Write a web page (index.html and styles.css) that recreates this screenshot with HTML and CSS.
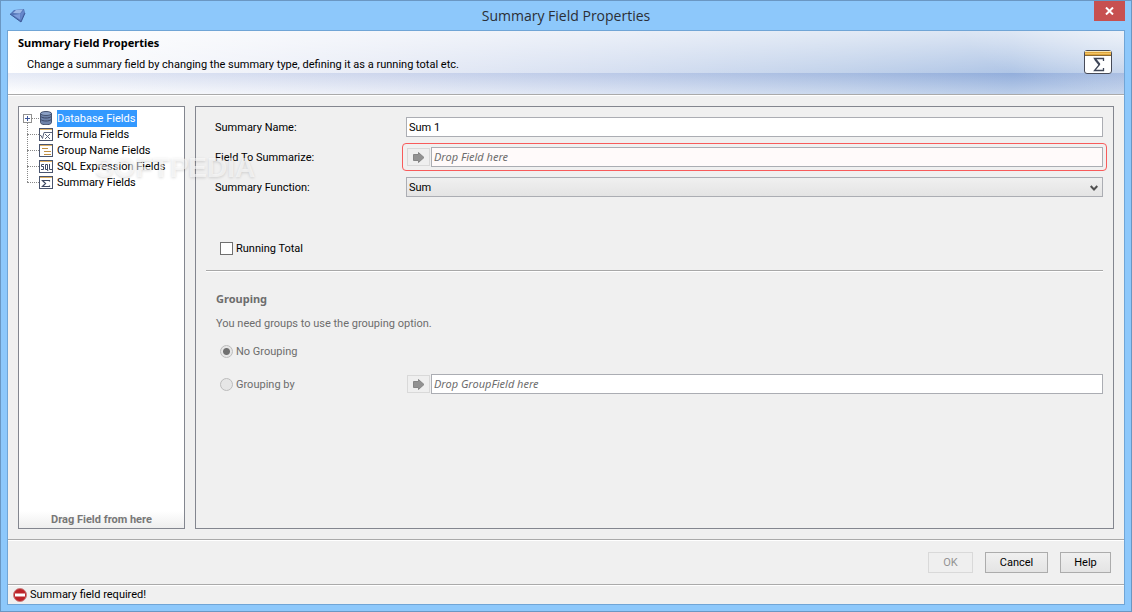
FILE: index.html
```html
<!DOCTYPE html>
<html lang="en">
<head>
<meta charset="utf-8">
<title>Summary Field Properties</title>
<link rel="stylesheet" href="styles.css">
</head>
<body>
<div class="window">
  <header class="titlebar">
    <svg class="gem" width="16" height="14" viewBox="0 0 16 14"><path d="M0 5 4 1l10-1 1 4-4 9z" fill="#5375b8"/><path d="M3 4l3-3 7-.5-3 4z" fill="#9db8e8"/><path d="M3 6l7-1 .5 6z" fill="#7d9cdb"/><path d="M10 5l4-4v3l-3 7z" fill="#6687cb"/><path d="M0 5l11 8 4-9" fill="none" stroke="#3d5898"/></svg>
    <h1 class="caption">Summary Field Properties</h1>
    <button class="close" aria-label="Close"><svg width="9" height="8" viewBox="0 0 9 8"><path d="M1 .5l7 7M8 .5l-7 7" stroke="#fff" stroke-width="2"/></svg></button>
  </header>
  <main class="client">
    <section class="banner">
      <div>
        <h2 class="banner-title">Summary Field Properties</h2>
        <p class="banner-text">Change a summary field by changing the summary type, defining it as a running total etc.</p>
      </div>
      <svg class="banner-icon" width="28" height="24" viewBox="0 0 28 24"><rect x=".5" y=".5" width="27" height="23" rx="2.5" fill="#fff" stroke="#474b58"/><path d="M1 2h26v4H1z" fill="#dfa53b"/><path d="M1 1.500h26" stroke="#fae6b2"/><path d="M1 3.500h26" stroke="#f0c468"/><path d="M1 5.500h26" stroke="#8d6a33"/><path d="M19.500 11V8.500h-9l5 6-5 6h9V18" fill="none" stroke="#3f4658" stroke-width="1.300"/><path d="M11 9l4.500 5.500" stroke="#3f4658" stroke-width="2"/></svg>
    </section>
    <div class="content">
      <nav class="tree-panel" aria-label="Fields">
        <ul class="tree">
          <li class="node root"><button class="expand" aria-label="Expand"></button><svg class="node-icon" width="14" height="14" viewBox="0 0 14 14"><path d="M1.500 2.500v9c0 3 11 3 11 0v-9z" fill="#6e83aa" stroke="#44526f"/><ellipse cx="7" cy="2.500" rx="5.500" ry="2" fill="#8ca1c6" stroke="#44526f"/><path d="M2 5.500c1 2 9 2 10 0M2 8.500c1 2 9 2 10 0" fill="none" stroke="#3b4868"/></svg><span class="node-label selected">Database Fields</span></li>
          <li class="node"><svg class="node-icon" width="14" height="13" viewBox="0 0 14 13"><rect x=".5" y=".5" width="13" height="12" fill="#fff" stroke="#4a556f"/><path d="M1 1.500h12" stroke="#dfb266"/><path d="M0 7.500h2l1.500 3 1.500-6h8M6 6l5 5M11 6l-5 5" fill="none" stroke="#59637b"/></svg><span class="node-label">Formula Fields</span></li>
          <li class="node"><svg class="node-icon" width="14" height="13" viewBox="0 0 14 13"><rect x=".5" y=".5" width="13" height="12" fill="#fff" stroke="#4a556f"/><path d="M1 1.500h12" stroke="#dfb266"/><path d="M3 4.500h6M5 7.500h7M5 10.500h7" stroke="#c08f42"/></svg><span class="node-label">Group Name Fields</span></li>
          <li class="node"><svg class="node-icon" width="14" height="13" viewBox="0 0 14 13"><rect x=".5" y=".5" width="13" height="12" fill="#fff" stroke="#4a556f"/><path d="M1 1.500h12" stroke="#dfb266"/><path d="M5 4.500H2.500v2h2v3H2M6.500 4.500h2v5h-2zM8 9l1 2M10.500 4v5.500H13" fill="none" stroke="#3f4a63"/></svg><span class="node-label">SQL Expression Fields</span></li>
          <li class="node"><svg class="node-icon" width="14" height="13" viewBox="0 0 14 13"><rect x=".5" y=".5" width="13" height="12" fill="#fff" stroke="#4a556f"/><path d="M1 1.500h12" stroke="#dfb266"/><path d="M10.500 5.500v-1h-7l3 3-3 3h7v-1" fill="none" stroke="#3f4a63" stroke-width="1.200"/></svg><span class="node-label">Summary Fields</span></li>
        </ul>
        <p class="drag-hint">Drag Field from here</p>
      </nav>
      <form class="form-panel">
        <div class="row">
          <label for="name">Summary Name:</label>
          <input class="text" id="name" type="text" value="Sum 1">
        </div>
        <div class="row">
          <label for="field">Field To Summarize:</label>
          <div class="drop invalid">
            <button class="arrow" type="button" aria-label="Add field"><svg width="12" height="11" viewBox="0 0 12 11"><path d="M.5 2.500h5v-2L11 5.500l-5.500 5v-2h-5z" fill="#929292" stroke="#858585"/></svg></button>
            <input class="text" id="field" type="text" placeholder="Drop Field here">
          </div>
        </div>
        <div class="row">
          <label for="function">Summary Function:</label>
          <div class="combo"><select class="select" id="function"><option>Sum</option></select><svg class="chevron" width="8" height="7" viewBox="0 0 8 7"><path d="M.7 1 4 4.500 7.300 1" fill="none" stroke="#505050" stroke-width="2"/></svg></div>
        </div>
        <label class="choice running"><input class="check" type="checkbox">Running Total</label>
        <hr class="rule">
        <fieldset class="grouping">
          <legend class="legend">Grouping</legend>
          <p class="note">You need groups to use the grouping option.</p>
          <label class="choice no-group"><input class="radio" type="radio" name="grouping" checked disabled>No Grouping</label>
          <div class="row group-by">
            <label class="choice"><input class="radio" type="radio" name="grouping" disabled>Grouping by</label>
            <div class="drop">
              <button class="arrow" type="button" aria-label="Add group field"><svg width="12" height="11" viewBox="0 0 12 11"><path d="M.5 2.500h5v-2L11 5.500l-5.500 5v-2h-5z" fill="#929292" stroke="#858585"/></svg></button>
              <input class="text" type="text" placeholder="Drop GroupField here" aria-label="Group field">
            </div>
          </div>
        </fieldset>
      </form>
    </div>
    <div class="actions">
      <button class="btn ok" disabled>OK</button>
      <button class="btn cancel">Cancel</button>
      <button class="btn help">Help</button>
    </div>
    <footer class="status">
      <svg width="14" height="14" viewBox="0 0 14 14"><circle cx="7" cy="7" r="6.500" fill="#bd2328" stroke="#c98080"/><path d="M2 5.500h10v3H2z" fill="#fff"/></svg>
      <span>Summary field required!</span>
    </footer>
  </main>
  <div class="watermark" aria-hidden="true">SOFTPEDIA</div>
</div>
</body>
</html>
```

FILE: styles.css
```css
* { box-sizing: border-box; }
body { margin: 0; font: 11px/17px Roboto, "Noto Sans", sans-serif; color: #000; }
h1, h2, p, ul { margin: 0; padding: 0; }
ul { list-style: none; }
button, input, select { font: inherit; color: inherit; margin: 0; padding: 0; border-radius: 0; }

.window { position: relative; display: flex; flex-direction: column; min-height: 100vh; padding: 0 6px 6px; background: #8dc8fb; border: 1px solid #6a97c3; }
.titlebar { position: relative; display: flex; align-items: center; justify-content: center; height: 29px; }
.gem { position: absolute; left: 3px; top: 8px; }
.caption { font: 400 14px/20px "Open Sans", sans-serif; color: #2b2f36; }
.close { position: absolute; right: 0; top: 0; display: grid; place-items: center; width: 31px; height: 20px; border: 0; background: #c75050; }

.client { flex: 1; display: flex; flex-direction: column; border: 1px solid #70a5d6; background: #f0f0f0; }
.banner { display: flex; justify-content: space-between; height: 65px; padding: 4px 12px 0 10px; border-bottom: 1px solid #fff; box-shadow: inset 0 -1px #aaa;
  background:
    linear-gradient(rgba(255,255,255,.62) 0, rgba(255,255,255,.18) 42px, rgba(90,120,195,.16) 42px, rgba(255,255,255,.3) 63px),
    radial-gradient(ellipse 160px 60px at 100% 0, rgba(255,255,255,.4), rgba(255,255,255,0)),
    linear-gradient(90deg, #fff 0, #e2e7f4 34%, #ccd8ee 55%, #b4c8e6 75%, #9db8e0 90%, #b0c5e5 100%); }
.banner-title { font: 700 11px/16px "Noto Sans", sans-serif; }
.banner-text { margin-top: 5px; padding-left: 9px; }
.banner-icon { margin-top: 15px; }

.content { flex: 1; display: flex; gap: 10px; padding: 10px; }
.tree-panel { flex: none; width: 167px; display: flex; flex-direction: column; justify-content: space-between; border: 1px solid #83868f; background: #fff; }
.tree { padding: 3px 0 0 4px; }
.node { position: relative; display: flex; align-items: center; height: 16px; padding-left: 16px; }
.node::before { content: ""; position: absolute; left: 4px; top: 8px; width: 12px; border-top: 1px dotted #888; }
.node::after { content: ""; position: absolute; left: 4px; top: -8px; height: 16px; border-left: 1px dotted #888; }
.root::after { display: none; }
.expand { position: absolute; z-index: 1; left: 0; top: 4px; width: 9px; height: 9px; border: 1px solid #919191; background: linear-gradient(#3d579b, #3d579b) center / 5px 1px no-repeat, linear-gradient(#3d579b, #3d579b) center / 1px 5px no-repeat, #fff; }
.node-icon { flex: none; margin-right: 4px; }
.node-label { padding-right: 2px; white-space: nowrap; }
.selected { background: #3399ff; color: #fff; }
.drag-hint { text-align: center; font-weight: 700; color: #777; background: linear-gradient(#fff, #eee); }

.form-panel { flex: 1; min-width: 0; padding: 10px; border: 1px solid #83868f; }
.row { display: grid; grid-template-columns: 191px minmax(0, 1fr); align-items: center; height: 20px; margin-bottom: 10px; padding-left: 9px; }
.text { width: 100%; min-width: 0; height: 20px; padding: 0 2px; border: 1px solid #abadb3; background: #fff; }
.text::placeholder { font-family: "Noto Sans", sans-serif; color: #6d6d6d; font-style: italic; opacity: 1; }
.drop { position: relative; display: flex; align-items: center; gap: 1px; padding-left: 1px; }
.invalid::after { content: ""; position: absolute; inset: -4px; border: 1px solid #f85b5b; border-radius: 4px; pointer-events: none; }
.invalid .text { background: #fffafa; }
.arrow { flex: none; display: grid; place-items: center; width: 23px; height: 18px; border: 1px solid #d9d9d9; background: #efefef; }
.combo { position: relative; }
.select { display: block; width: 100%; height: 20px; padding: 0 2px; border: 1px solid #abadb3; background: linear-gradient(#f0f0f0, #e4e4e4); appearance: none; }
.chevron { position: absolute; right: 5px; top: 8px; pointer-events: none; }
.choice { display: flex; align-items: center; gap: 3px; height: 16px; }
.running { margin: 43px 0 0 14px; }
.check, .radio { appearance: none; flex: none; width: 13px; height: 13px; border: 1px solid #707070; background: #fff; }
.check:checked { background: #555; }
.radio { border-color: #bcbcbc; border-radius: 50%; background: #e6e6e6; }
.radio:checked { background: radial-gradient(circle, #707070 3px, #e6e6e6 4px); }
.rule { height: 2px; margin: 14px 0 19px; border: 0; border-top: 1px solid #a8a8a8; border-bottom: 1px solid #fff; }
.grouping { margin: 0; padding: 0; border: 0; min-width: 0; color: #6d6d6d; }
.legend { padding: 0 0 0 10px; font: 700 11px/16px "Noto Sans", sans-serif; }
.note { margin-top: 8px; padding-left: 10px; }
.no-group { margin: 11px 0 15px 14px; }
.group-by .choice { padding-left: 5px; }

.actions { display: flex; justify-content: flex-end; gap: 12px; padding: 12px 13px 11px; border-top: 1px solid #aaa; box-shadow: inset 0 1px #fff; }
.btn { height: 21px; border: 1px solid #acacac; background: linear-gradient(#f0f0f0, #e4e4e4); }
.ok { width: 45px; }
.cancel { width: 63px; }
.help { width: 51px; }
.btn:disabled { border-color: #d9d9d9; background: #efefef; color: #939393; }
.status { display: flex; align-items: center; gap: 3px; height: 20px; padding-left: 5px; border-top: 1px solid #aaa; box-shadow: inset 0 1px #fff; }

.watermark { position: absolute; left: 94px; top: 151px; font: 700 28px/32px "Liberation Sans", sans-serif; color: rgba(255,255,255,.6); text-shadow: 0 1px 3px rgba(0,0,0,.14); pointer-events: none; }
```
